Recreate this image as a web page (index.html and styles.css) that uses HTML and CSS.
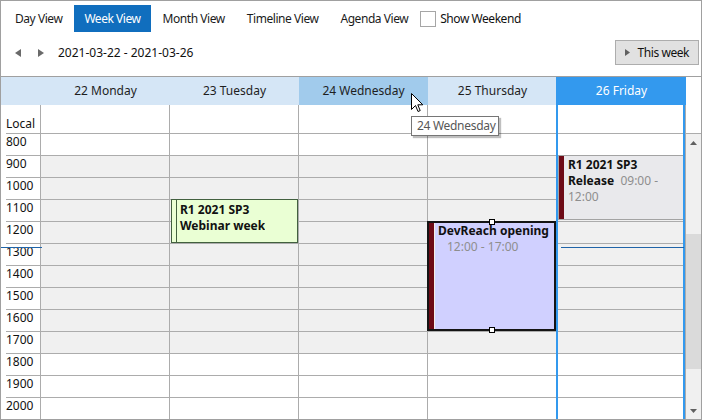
FILE: index.html
```html
<!DOCTYPE html>
<html>
<head>
<meta charset="utf-8">
<link rel="stylesheet" href="styles.css">
</head>
<body>
<div class="frame">
  <div class="toolbar">
    <div class="views">
      <span class="vbtn">Day View</span>
      <span class="vbtn active">Week View</span>
      <span class="vbtn">Month View</span>
      <span class="vbtn">Timeline View</span>
      <span class="vbtn">Agenda View</span>
      <label class="check"><span class="box"></span>Show Weekend</label>
    </div>
    <div class="nav">
      <span class="arrow"><svg width="6" height="8" viewBox="0 0 6 8"><path d="M6 0V8L0 4Z" fill="#6a6a6a"/></svg></span>
      <span class="arrow"><svg width="6" height="8" viewBox="0 0 6 8"><path d="M0 0V8L6 4Z" fill="#6a6a6a"/></svg></span>
      <span class="range">2021-03-22 - 2021-03-26</span>
      <span class="thisweek"><svg width="5" height="7" viewBox="0 0 5 7"><path d="M0 0V7L5 3.5Z" fill="#606060"/></svg>This week</span>
    </div>
  </div>

  <div class="scheduler">
    <div class="header cols">
      <div class="hcell"></div>
      <div class="hcell">22 Monday</div>
      <div class="hcell">23 Tuesday</div>
      <div class="hcell hover">24 Wednesday</div>
      <div class="hcell">25 Thursday</div>
      <div class="hcell today">26 Friday</div>
      <div class="hfill"></div>
    </div>
    <div class="allday cols">
      <div class="tcell">Local</div>
      <div class="dcell"></div>
      <div class="dcell"></div>
      <div class="dcell"></div>
      <div class="dcell"></div>
      <div class="dcell"></div>
      <div class="afill"></div>
    </div>
    <div class="timed">
      <div class="days">
        <div class="timecol">
          <div class="tslot">800</div>
          <div class="tslot">900</div>
          <div class="tslot">1000</div>
          <div class="tslot">1100</div>
          <div class="tslot">1200</div>
          <div class="tslot">1300</div>
          <div class="tslot">1400</div>
          <div class="tslot">1500</div>
          <div class="tslot">1600</div>
          <div class="tslot">1700</div>
          <div class="tslot">1800</div>
          <div class="tslot">1900</div>
          <div class="tslot">2000</div>
        </div>
        <div class="day">
          <div class="slot"></div><div class="slot work"></div><div class="slot work"></div><div class="slot work"></div><div class="slot work"></div><div class="slot work"></div><div class="slot work"></div><div class="slot work"></div><div class="slot work"></div><div class="slot work"></div><div class="slot"></div><div class="slot"></div><div class="slot"></div>
        </div>
        <div class="day">
          <div class="slot"></div><div class="slot work"></div><div class="slot work"></div><div class="slot work"></div><div class="slot work"></div><div class="slot work"></div><div class="slot work"></div><div class="slot work"></div><div class="slot work"></div><div class="slot work"></div><div class="slot"></div><div class="slot"></div><div class="slot"></div>
          <div class="event ev-green" style="top:66px;height:44px;left:1px;width:127px">
            <div class="ev-bar"></div>
            <div class="ev-body"><div class="ev-title">R1 2021 SP3</div><div class="ev-title">Webinar week</div></div>
          </div>
        </div>
        <div class="day">
          <div class="slot"></div><div class="slot work"></div><div class="slot work"></div><div class="slot work"></div><div class="slot work"></div><div class="slot work"></div><div class="slot work"></div><div class="slot work"></div><div class="slot work"></div><div class="slot work"></div><div class="slot"></div><div class="slot"></div><div class="slot"></div>
        </div>
        <div class="day">
          <div class="slot"></div><div class="slot work"></div><div class="slot work"></div><div class="slot work"></div><div class="slot work"></div><div class="slot work"></div><div class="slot work"></div><div class="slot work"></div><div class="slot work"></div><div class="slot work"></div><div class="slot"></div><div class="slot"></div><div class="slot"></div>
          <div class="event ev-selected" style="top:88px;height:110px;left:-1px;width:129px">
            <div class="ev-bar"></div>
            <div class="ev-body"><div class="ev-title">DevReach opening</div><div class="ev-time indent">12:00 - 17:00</div></div>
            <span class="handle top"></span>
            <span class="handle bottom"></span>
          </div>
        </div>
        <div class="day">
          <div class="slot"></div><div class="slot work"></div><div class="slot work"></div><div class="slot work"></div><div class="slot work"></div><div class="slot work"></div><div class="slot work"></div><div class="slot work"></div><div class="slot work"></div><div class="slot work"></div><div class="slot"></div><div class="slot"></div><div class="slot"></div>
          <div class="event ev-gray" style="top:22px;height:65px;left:1px;width:126px">
            <div class="ev-bar"></div>
            <div class="ev-body"><div class="ev-title">R1 2021 SP3</div><div><span class="ev-title">Release</span> <span class="ev-time">&nbsp;09:00 -</span></div><div class="ev-time">12:00</div></div>
          </div>
        </div>
      </div>
      <div class="scrollbar">
        <div class="sb-btn"><svg width="7" height="4" viewBox="0 0 7 4"><path d="M0 4H7L3.5 0Z" fill="#606060"/></svg></div>
        <div class="sb-track"><div class="sb-thumb" style="margin-top:83px;height:135px"></div></div>
        <div class="sb-btn"><svg width="7" height="4" viewBox="0 0 7 4"><path d="M0 0H7L3.5 4Z" fill="#606060"/></svg></div>
      </div>
    </div>
    <div class="today-frame"></div>
    <div class="now-line now-time"></div>
    <div class="now-line now-day"></div>
  </div>

  <div class="tooltip">24 Wednesday</div>
  <svg class="cursor" width="13" height="20" viewBox="0 0 13 20"><path d="M0.5 0.5V16.5L4.5 12.5L7 18.5L9.2 17.6L6.8 11.8H11.8Z" fill="#fff" stroke="#000" stroke-width="1" stroke-linejoin="miter"/></svg>
</div>
</body>
</html>
```

FILE: styles.css
```css
* { box-sizing: border-box; }
body {
  margin: 0;
  font-family: "Noto Sans", "Open Sans", sans-serif;
  font-size: 12px;
  color: #111;
  background: #fff;
}
.frame {
  width: 702px;
  height: 420px;
  border: 1px solid #a0a0a0;
  position: relative;
  overflow: hidden;
  background: #fff;
  display: flex;
  flex-direction: column;
}
.toolbar { height: 75px; flex: none; letter-spacing: -0.45px; }
.views {
  display: flex;
  align-items: center;
  height: 27px;
  margin: 4px 0 0 4px;
}
.vbtn {
  height: 27px;
  line-height: 27px;
  padding: 0 10px;
  margin-right: 2px;
  color: #1b1b1b;
  white-space: nowrap;
}
.vbtn.active { background: #106ebe; color: #fff; }
.check { display: flex; align-items: center; margin-left: 0; white-space: nowrap; }
.check .box {
  width: 16px; height: 16px;
  border: 1px solid #a6a6a6;
  background: #fff;
  margin-right: 4px;
}
.nav {
  display: flex;
  align-items: center;
  height: 25px;
  margin-top: 8px;
  padding: 0 2px 0 14px;
}
.arrow { display: flex; width: 6px; }
.arrow + .arrow { margin-left: 17px; }
.range { margin-left: 14px; letter-spacing: 0; }
.thisweek {
  margin-left: auto;
  height: 25px;
  border: 1px solid #adadad;
  background: #e1e1e1;
  padding: 0 9px 0 9px;
  display: flex;
  align-items: center;
  gap: 8px;
}

.scheduler {
  flex: 1;
  border-top: 1px solid #a0a0a0;
  position: relative;
  display: flex;
  flex-direction: column;
}
.cols { display: grid; grid-template-columns: 40px repeat(5, 129px) 1fr; }
.header { height: 28px; flex: none; }
.hcell {
  background: #d5e6f6;
  display: flex;
  align-items: center;
  justify-content: center;
  line-height: 16px;
  color: #1e1e1e;
}
.hcell.hover { background: #a1cbec; }
.hcell.today { background: #3399ee; color: #fff; }
.hfill { background: #fff; }
.allday { height: 28px; flex: none; }
.allday .tcell {
  border-right: 1px solid #acacac;
  display: flex;
  align-items: flex-end;
  padding: 0 0 1px 5px;
  line-height: 16px;
}
.allday .dcell { border-right: 1px solid #acacac; }

.timed { display: flex; flex: 1; }
.days { display: grid; grid-template-columns: 40px repeat(5, 129px); }
.timecol { border-right: 1px solid #acacac; }
.tslot {
  height: 22px;
  border-top: 1px solid #acacac;
  margin-left: 5px;
  line-height: 16px;
}
.day { border-right: 1px solid #acacac; position: relative; }
.slot { height: 22px; border-top: 1px solid #acacac; }
.slot.work { background: #f0f0f0; }

.scrollbar {
  flex: 1;
  border-top: 1px solid #acacac;
  background: #f0f0f0;
  display: flex;
  flex-direction: column;
}
.sb-btn { height: 17px; display: flex; align-items: center; justify-content: center; flex: none; }
.sb-track { flex: 1; }
.sb-thumb { background: #dadada; }

.event {
  position: absolute;
  display: flex;
  line-height: 16px;
  z-index: 1;
}
.ev-bar { width: 5px; flex: none; }
.ev-body { overflow: hidden; white-space: nowrap; }
.ev-title { font-weight: bold; color: #111; }
.ev-time { color: #8e8e8e; }
.ev-time.indent { padding-left: 9px; }

.ev-green { border: 1px solid #42603f; background: #eaffd4; }
.ev-green .ev-bar { border-right: 1px solid #42603f; }
.ev-green .ev-body { padding: 2px 0 0 3px; }

.ev-selected { border: 2px solid #141414; background: #d0d0ff; }
.ev-selected .ev-bar { width: 6px; background: #6d0a16; border-right: 1px solid #f3eee6; }
.ev-selected .ev-body { padding: 0 0 0 3px; }
.handle {
  position: absolute;
  left: calc(50% - 3px);
  width: 6px; height: 6px;
  border: 1px solid #000;
  background: #fff;
}
.handle.top { top: -4px; }
.handle.bottom { bottom: -4px; }

.ev-gray { border: 1px solid #a3a3a3; background: #e9e9ec; }
.ev-gray .ev-bar { background: #6d0a16; }
.ev-gray .ev-body { padding: 1px 0 0 4px; }

.today-frame {
  position: absolute;
  left: 555px;
  top: 0;
  bottom: 0;
  width: 129px;
  border-left: 2px solid #3399ee;
  border-right: 2px solid #3399ee;
  z-index: 2;
  pointer-events: none;
}
.now-line { position: absolute; height: 1px; background: #2064a8; z-index: 3; top: 170px; }
.now-time { left: 0; width: 41px; }
.now-day { left: 560px; width: 123px; }

.tooltip {
  position: absolute;
  left: 410px;
  top: 115px;
  width: 88px;
  height: 20px;
  border: 1px solid #767676;
  background: #fff;
  box-shadow: 2px 2px 1px rgba(0,0,0,0.25);
  padding-left: 5px;
  line-height: 18px;
  letter-spacing: -0.3px;
  color: #575757;
  z-index: 5;
  white-space: nowrap;
}
.cursor { position: absolute; left: 410px; top: 92px; z-index: 6; }
```
